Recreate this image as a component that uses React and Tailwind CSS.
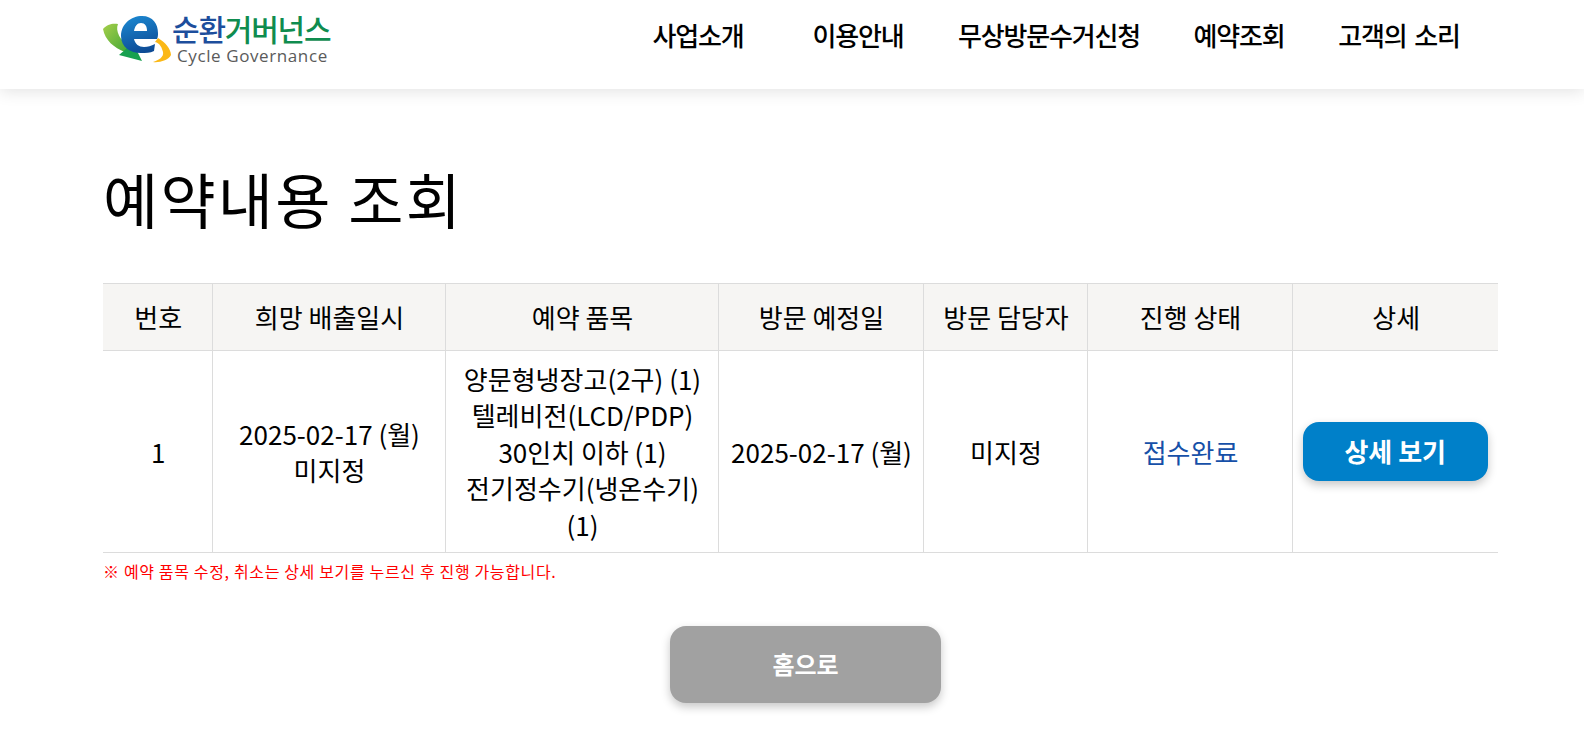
const kr = "font-['Noto_Sans_CJK_KR','Noto_Sans',sans-serif]"

const Logo = () => (
  <div className="flex items-start">
    <svg width="68" height="50" viewBox="0 0 68 50" className="mt-[15px] shrink-0">
      <defs>
        <linearGradient id="swoosh" x1="0" y1="0" x2="1" y2="1">
          <stop offset="0" stopColor="#a5cf4a" />
          <stop offset="1" stopColor="#3fa535" />
        </linearGradient>
        <linearGradient id="letter" x1="0.3" y1="0" x2="0.6" y2="1">
          <stop offset="0" stopColor="#1b86cf" />
          <stop offset="1" stopColor="#0d4a94" />
        </linearGradient>
      </defs>
      <path d="M0 14 C4 9 10 8 15 9 C12 16 17 25 27 33 L22 37 C11 33 2 25 0 14 Z" fill="url(#swoosh)" />
      <path d="M30 28 L39 46 L16 40 Z" fill="#17a04f" />
      <path d="M55 23 C62 27 68 34 68 40 C66 45 56 48 50 47 C56 45 61 42 60 37 C59 33 57 28 52 27 Z" fill="#fbb816" />
      <path
        d="M18 21 C18 9 28 1 39 1 C50 1 55 9 55 18 C55 20 55 22 54 24 L31 24 C32 29 36 32 41 32 C45 32 48 31 52 29 L51 36 C47 38 43 38 38 38 C27 38 18 32 18 21 Z M31 16 L44 16 C44 11 42 8 38 8 C34 8 32 11 31 16 Z"
        fill="url(#letter)"
        fillRule="evenodd"
      />
    </svg>
    <div className="ml-[1px] mt-[11px] flex flex-col">
      <div className={`${kr} text-[30px] leading-[35px] font-medium tracking-[-1.2px] whitespace-nowrap`}>
        <span className="text-[#1d4e9c]">순환</span>
        <span className="text-[#0f8c4f]">거버넌스</span>
      </div>
      <div className="font-['Open_Sans',sans-serif] text-[17px] leading-[20px] tracking-[0.6px] text-[#5a5a5a] whitespace-nowrap ml-[5px]">
        Cycle Governance
      </div>
    </div>
  </div>
)

const navItems = [
  { label: "사업소개", cls: "w-[92px] mr-[68px]" },
  { label: "이용안내", cls: "w-[92px] mr-[54px]" },
  { label: "무상방문수거신청", cls: "w-[182px] mr-[53px]" },
  { label: "예약조회", cls: "w-[92px] mr-[53px]" },
  { label: "고객의 소리", cls: "w-[122px] [word-spacing:3px]" },
]

const cellCls = "border-r border-[#dcdcdc] last:border-r-0 text-center align-middle"
const textCls = "pl-[6px] pr-[4px] pt-[1px]"

const App = () => {
  return (
    <div className={`${kr} w-[1584px] h-[755px] overflow-hidden bg-white text-black`}>
      <header className="h-[89px] bg-white shadow-[0_2px_16px_rgba(0,0,0,0.12)] pl-[103px] pr-[124px] flex justify-between items-start">
        <Logo />
        <nav className="flex mt-[17px]">
          {navItems.map((item) => (
            <a key={item.label} className={`${item.cls} block text-center text-[26px] leading-[36px] font-medium tracking-[-1.2px] whitespace-nowrap`}>
              {item.label}
            </a>
          ))}
        </nav>
      </header>

      <main className="px-[103px]">
        <h1 className="mt-[71px] h-[123px] text-[60px] leading-[76px] font-normal tracking-[2.2px] whitespace-nowrap">
          예약내용 조회
        </h1>

        <table className="w-[1395px] table-fixed border-collapse text-[26px] leading-[36.4px] border-y border-[#dcdcdc]">
          <colgroup>
            <col className="w-[109px]" />
            <col className="w-[233px]" />
            <col className="w-[273px]" />
            <col className="w-[205px]" />
            <col className="w-[164px]" />
            <col className="w-[205px]" />
            <col className="w-[206px]" />
          </colgroup>
          <thead>
            <tr className="h-[67px] bg-[#f6f5f3] border-b border-[#dcdcdc]">
              {["번호", "희망 배출일시", "예약 품목", "방문 예정일", "방문 담당자", "진행 상태", "상세"].map((h) => (
                <th key={h} className={`${cellCls} ${textCls} font-normal`}>
                  {h}
                </th>
              ))}
            </tr>
          </thead>
          <tbody>
            <tr className="h-[202px]">
              <td className={`${cellCls} ${textCls}`}>1</td>
              <td className={`${cellCls} ${textCls}`}>
                2025-02-17 (월)
                <br />
                미지정
              </td>
              <td className={`${cellCls} ${textCls}`}>
                양문형냉장고(2구) (1)
                <br />
                텔레비전(LCD/PDP)
                <br />
                30인치 이하 (1)
                <br />
                전기정수기(냉온수기)
                <br />
                (1)
              </td>
              <td className={`${cellCls} ${textCls}`}>2025-02-17 (월)</td>
              <td className={`${cellCls} ${textCls}`}>미지정</td>
              <td className={`${cellCls} ${textCls} text-[#1650a8]`}>접수완료</td>
              <td className={`${cellCls} px-[5px]`}>
                <button className="w-[185px] h-[59px] rounded-[16px] bg-[#0080c9] text-white font-bold text-[26px] shadow-[0_4px_10px_rgba(0,0,0,0.22)]">
                  상세 보기
                </button>
              </td>
            </tr>
          </tbody>
        </table>

        <p className="mt-[5px] text-[16px] leading-[26px] text-[#ff0000] tracking-[0.65px] font-normal">
          ※ 예약 품목 수정, 취소는 상세 보기를 누르신 후 진행 가능합니다.
        </p>

        <div className="mt-[42px] ml-[567px]">
          <button className="w-[271px] h-[77px] pb-[2px] rounded-[16px] bg-[#a1a1a1] text-white font-bold text-[24px] shadow-[0_4px_10px_rgba(0,0,0,0.22)]">
            홈으로
          </button>
        </div>
      </main>
    </div>
  )
}

export default App
